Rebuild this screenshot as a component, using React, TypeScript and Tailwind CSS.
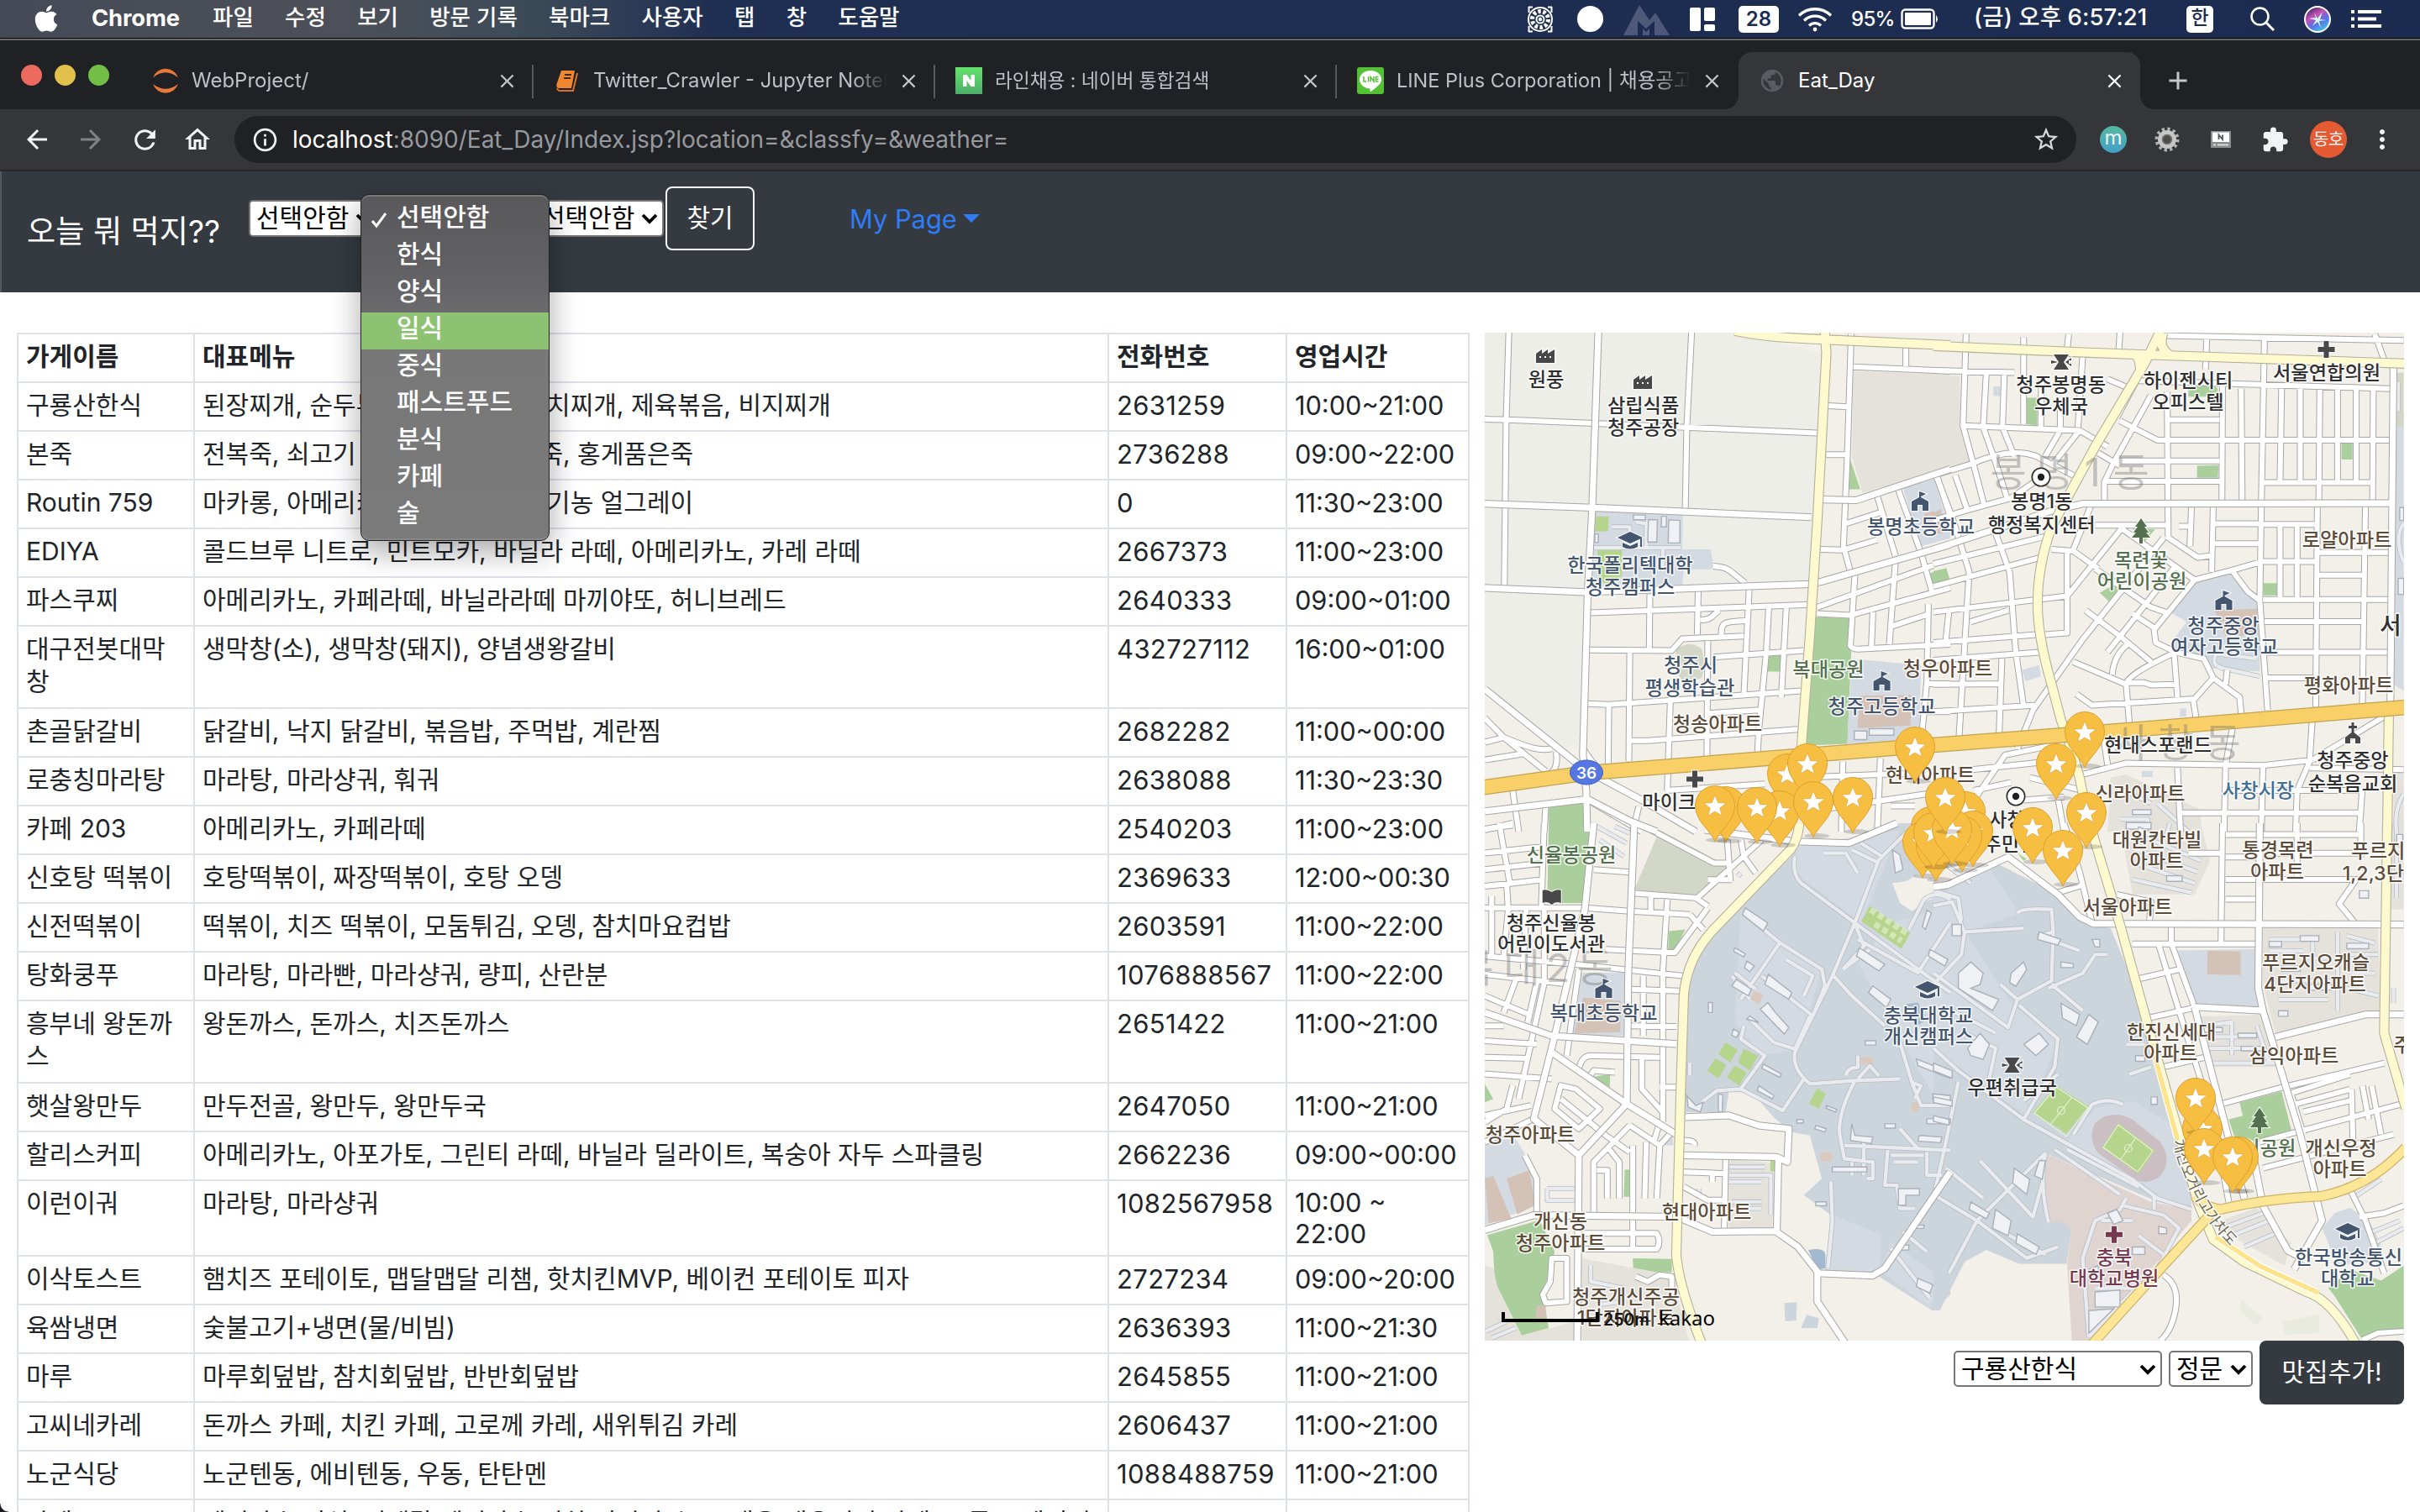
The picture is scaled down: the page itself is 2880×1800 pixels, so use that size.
import type { ReactNode } from "react";
import { FaApple } from "react-icons/fa";
import {
  MdArrowBack,
  MdArrowForward,
  MdRefresh,
  MdOutlineHome,
  MdInfoOutline,
  MdStarBorder,
  MdExtension,
  MdMoreVert,
  MdClose,
  MdAdd,
  MdPublic,
} from "react-icons/md";

/* ---------- macOS menu bar ---------- */

const menus = ["파일", "수정", "보기", "방문 기록", "북마크", "사용자", "탭", "창", "도움말"];

function MenuBar() {
  return (
    <header className="flex h-[45px] shrink-0 items-center bg-[linear-gradient(to_right,#454a57_0,#4d5058_400px,#3b4a58_640px,#1f2f52_850px,#1c2c50_100%)] pr-[46px] pl-10 text-[26.5px] font-medium text-white">
      <FaApple className="h-9 w-[30px] -translate-y-px" />
      <span className="ml-[39px] w-[108px] text-[27.3px] font-bold tracking-[-0.1px]">Chrome</span>
      <nav className="-mt-1 ml-9 flex gap-[37.3px]">
        {menus.map((m) => (
          <span key={m}>{m}</span>
        ))}
      </nav>
      <div className="ml-auto flex items-center">
        <svg width="32" height="32" viewBox="0 0 32 32" fill="none" stroke="#fff" strokeWidth="2">
          <circle cx="16" cy="16" r="14" />
          <circle cx="16" cy="16" r="9.500" strokeDasharray="3.500 2.467" strokeWidth="5" />
          <circle cx="16" cy="16" r="4.500" />
          <circle cx="16" cy="16" r="1.200" />
          <path d="M2 1.500h5M25 1.500h5M2 30.500h5M25 30.500h5M2.500 1v7M29.500 1v7M2.500 24v7M29.500 24v7" />
        </svg>
        <span className="ml-7 size-[31px] rounded-full bg-white" />
        <svg className="mt-0.5 ml-6 opacity-45" width="55" height="36" viewBox="0 0 55 36">
          <path d="M0 36 19 0l12 18 7-9 17 27z" fill="#8a90ac" />
          <path d="M17 36V19l10 9 10-9v17h-6v-8l-4 4-4-4v8z" fill="#1c2c50" />
        </svg>
        <span className="ml-6 flex h-7 w-[30px] gap-1">
          <span className="h-7 w-[13px] rounded-[2px] bg-white" />
          <span className="flex w-[13px] flex-col gap-1">
            <span className="h-4 rounded-[2px] bg-white" />
            <span className="h-2 rounded-[2px] bg-white" />
          </span>
        </span>
        <span className="ml-7 flex h-8 w-12 items-center justify-center rounded-[5px] bg-white text-[24px] font-semibold text-[#1c2c50]">28</span>
        <svg className="ml-[22px]" width="42" height="30" viewBox="0 0 42 30" fill="none" stroke="#fff" strokeWidth="3.400">
          <path d="M2 10.500a27 27 0 0 1 38 0M8 16.500a18.500 18.500 0 0 1 26 0M14 22.500a10 10 0 0 1 14 0" />
          <circle cx="21" cy="27" r="1.400" fill="#fff" strokeWidth="2" />
        </svg>
        <span className="ml-[22px] w-[49px] text-[24px] tracking-[-0.7px]">95%</span>
        <svg className="ml-[10px]" width="47" height="26" viewBox="0 0 47 26">
          <rect x="1.500" y="1.500" width="38" height="22" rx="4" fill="none" stroke="#fff" strokeWidth="2.400" />
          <rect x="5" y="5" width="31" height="15" rx="1" fill="#fff" />
          <path d="M42 8q4 4.500 0 9z" fill="#fff" />
        </svg>
        <span className="ml-[40px] w-[211px] -translate-y-0.5 text-[27.500px] whitespace-nowrap tracking-[0.1px]">(금) 오후 6:57:21</span>
        <span className="ml-[42px] flex size-8 items-center justify-center rounded-[5px] bg-white pb-0.5 text-[23px] text-[#1c2c50]">한</span>
        <svg className="ml-11" width="29" height="29" viewBox="0 0 29 29" fill="none" stroke="#fff" strokeWidth="2.500">
          <circle cx="11.500" cy="11.500" r="10" />
          <path d="m19 19 9 9" strokeWidth="3" />
        </svg>
        <span className="ml-[35px] flex size-8 items-center justify-center rounded-full border-2 border-white bg-[linear-gradient(150deg,#2d2a63_5%,#c84fb0_35%,#5b6fe8_60%,#3fc4e6_90%)]">
          <svg width="24" height="24" viewBox="0 0 24 24" fill="#d8fbff">
            <path d="m12 11 6-8-3 9 7 1-8 1 2 8-4-7-6 5 4-7-8-2 8-1-2-6z" />
          </svg>
        </span>
        <svg className="ml-6" width="36" height="22" viewBox="0 0 36 22" fill="#fff">
          <path d="M0 0h4v4H0zM8 0h28v4H8zM0 8.500h4v4H0zM8 8.500h22v4H8zM0 17h4v4H0zM8 17h28v4H8z" />
        </svg>
      </div>
    </header>
  );
}

/* ---------- browser chrome ---------- */

function JupyterIcon() {
  return (
    <svg width="32" height="32" viewBox="0 0 32 32" fill="#e8793a">
      <path d="M1 12.500a15.800 15.800 0 0 1 30 0Q16 0 1 12.500zM1 20a15.800 15.800 0 0 0 30 0Q16 31.500 1 20z" />
    </svg>
  );
}

function NotebookIcon() {
  return (
    <svg className="ml-0.5" width="28" height="28" viewBox="0 0 28 28">
      <path d="M7 2h16l-4 21H3.500q-3-1-2-5z" fill="#f08630" />
      <path d="M11 7h8M10 11h8" stroke="#3a2a1c" strokeWidth="1.800" />
      <path d="M2 23q1 3 3 3h16l5-21" fill="none" stroke="#d87425" strokeWidth="2" />
    </svg>
  );
}

function NaverIcon() {
  return (
    <span className="flex size-8 items-center justify-center bg-[linear-gradient(#63e36c,#4dae68)]">
      <svg width="14" height="14" viewBox="0 0 14 14" fill="#fff">
        <path d="M0 0h4.500l5 7V0H14v14H9.500l-5-7v7H0z" />
      </svg>
    </span>
  );
}

function LineIcon() {
  return (
    <span className="flex size-8 items-center justify-center rounded-[3px] bg-[#55bf36]">
      <svg width="28" height="27" viewBox="0 0 28 27">
        <path d="M14 1c7 0 13 4.500 13 10.500C27 17 20 22 14.500 26c-1 .6-1.200-.5-1-3.500C6.500 22 1 17.500 1 11.500 1 5.500 7 1 14 1z" fill="#fff" />
        <path d="M6 8v6h3M11.500 8v6.500M14 14.500V8.500l4 5.500V8M23.500 8.500h-3v5.500h3M20.500 11.200h3" fill="none" stroke="#55bf36" strokeWidth="1.500" />
      </svg>
    </span>
  );
}

const tabs: { title: string; icon: ReactNode; sep: boolean; size: string }[] = [
  { title: "WebProject/", icon: <JupyterIcon />, sep: true, size: "text-[24px]" },
  { title: "Twitter_Crawler - Jupyter Notebook", icon: <NotebookIcon />, sep: true, size: "text-[23.8px]" },
  { title: "라인채용 : 네이버 통합검색", icon: <NaverIcon />, sep: true, size: "text-[22.7px]" },
  { title: "LINE Plus Corporation | 채용공고", icon: <LineIcon />, sep: false, size: "text-[23.5px]" },
];

function TabStrip() {
  return (
    <div className="flex h-[82px] shrink-0 items-end bg-[#202124] pl-[25px]">
      <div className="mb-[28px] flex w-[132px] gap-[15px]">
        <span className="size-[25px] rounded-full bg-[#ed6a5e]" />
        <span className="size-[25px] rounded-full bg-[#e1c04c]" />
        <span className="size-[25px] rounded-full bg-[#72be47]" />
      </div>
      {tabs.map((t) => (
        <div key={t.title} className="relative flex h-[68px] w-[478px] items-center pl-6">
          <span className="w-8">{t.icon}</span>
          <span className={`ml-[15px] w-[350px] overflow-hidden [mask-image:linear-gradient(to_right,#000_88%,transparent_100%)] whitespace-nowrap text-[#bdc1c6] ${t.size}`}>
            {t.title}
          </span>
          <MdClose className="ml-3 size-[27px] text-[#c4c7ca]" />
          {t.sep && <span className="absolute top-[15px] right-0 h-10 w-0.5 bg-[#55585c]" />}
        </div>
      ))}
      <div className="relative flex h-[68px] w-[478px] items-center rounded-t-[16px] bg-[#35363a] pl-6">
        <span className="absolute bottom-0 -left-4 size-4 bg-[radial-gradient(circle_at_0_0,transparent_15.5px,#35363a_16px)]" />
        <span className="absolute -right-4 bottom-0 size-4 bg-[radial-gradient(circle_at_100%_0,transparent_15.5px,#35363a_16px)]" />
        <MdPublic className="size-8 text-[#5a5c61]" />
        <span className="ml-[15px] w-[350px] text-[24px] text-white">Eat_Day</span>
        <MdClose className="ml-[13px] size-[27px] text-white" />
      </div>
      <MdAdd className="mb-[16px] ml-[27px] size-9 text-[#c4c7ca]" />
    </div>
  );
}

function Toolbar() {
  return (
    <div className="flex h-[72px] shrink-0 items-center bg-[#35363a] pl-[26px] text-[#f1f3f4]">
      <MdArrowBack className="size-9" />
      <MdArrowForward className="ml-7 size-9 text-[#818286]" />
      <MdRefresh className="ml-7 size-[37px]" />
      <MdOutlineHome className="ml-[26px] size-9" />
      <div className="ml-[26px] flex h-14 w-[2192px] items-center rounded-full bg-[#202124] pr-[19px] pl-5">
        <MdInfoOutline className="size-[33px]" />
        <span className="ml-4 text-[28px] text-[#96999d]">
          <span className="text-white">localhost</span>:8090/Eat_Day/Index.jsp?location=&amp;classfy=&amp;weather=
        </span>
        <MdStarBorder className="ml-auto size-[34px] text-[#d6d8da]" />
      </div>
      <span className="ml-7 flex size-8 items-center justify-center rounded-full bg-[linear-gradient(#55b9a0,#45a0c8)] text-[24px] leading-none">
        <span className="-mt-1">m</span>
      </span>
      <svg className="ml-8" width="32" height="32" viewBox="0 0 32 32" fill="none">
        <circle cx="16" cy="16" r="12.500" stroke="#b4b4b2" strokeWidth="4" strokeDasharray="3.270 3.270" />
        <circle cx="16" cy="16" r="8.500" stroke="#c6c6c4" strokeWidth="5" />
        <circle cx="16" cy="16" r="5.500" fill="#4b4b4b" stroke="#777" strokeWidth="1.500" />
      </svg>
      <svg className="ml-9" width="24" height="20" viewBox="0 0 24 20">
        <path d="M0 0h24v20H0z" fill="#8d8e90" />
        <path d="M2 1.500h20V13H2z" fill="#fff" />
        <path d="M9.500 10V4.500L14 10V4.500" fill="none" stroke="#555" strokeWidth="1.800" />
        <path d="M3 16.500h3M8 16.500h13" stroke="#eee" strokeWidth="1.500" />
      </svg>
      <MdExtension className="ml-9 size-[33px]" />
      <span className="ml-[25px] flex size-11 items-center justify-center rounded-full bg-[#e45b33] text-[20px] tracking-[-0.5px]">동호</span>
      <MdMoreVert className="ml-6 size-9" />
    </div>
  );
}

/* ---------- page header ---------- */

function Chevron() {
  return (
    <svg width="20" height="14" viewBox="0 0 20 14" fill="none" stroke="currentColor" strokeWidth="3.800" className="shrink-0">
      <path d="m2 3 8 8 8-8" />
    </svg>
  );
}

function SelectBox({ label, className }: { label: string; className: string }) {
  return (
    <div className={`flex items-center justify-between rounded-[5px] border-2 border-[#767676] bg-white pr-[5px] pl-[7px] text-[30px] leading-[36px] text-black ${className}`}>
      <span className="-mt-0.5 whitespace-nowrap">{label}</span>
      <Chevron />
    </div>
  );
}

const options = ["선택안함", "한식", "양식", "일식", "중식", "패스트푸드", "분식", "카페", "술"];

function OptionMenu() {
  return (
    <ul className="absolute top-[-7px] left-[-23px] z-10 h-[413px] w-[225px] overflow-hidden rounded-[10px] border border-[#222] bg-[linear-gradient(#59595b_0,#616163_90px,#6b6b6d_140px,#787878_190px,#7a7a7a_100%)] pt-2 text-[30px] leading-[40px] font-medium text-white shadow-[0_12px_36px_rgba(0,0,0,0.35),inset_0_2px_0_rgba(255,255,255,0.18),inset_0_-2px_0_rgba(255,255,255,0.1)]">
      {options.map((o, i) => (
        <li key={o} className={`flex h-11 items-center pb-2 ${i === 3 ? "bg-[#8dc272]" : ""}`}>
          <span className="ml-[11px] flex w-[31px]">
            {i === 0 && (
              <svg className="mt-2" width="20" height="20" viewBox="0 0 20 20" fill="none" stroke="#fff" strokeWidth="3">
                <path d="m2 11 5 6L18 2" />
              </svg>
            )}
          </span>
          {o}
        </li>
      ))}
    </ul>
  );
}

function PageHeader() {
  return (
    <div className="flex h-[144px] shrink-0 items-start border-l-2 border-[#54595d] bg-[#343a40] pt-[18px] pl-[30px] text-white">
      <h1 className="mt-[28px] w-[264px] text-[37.2px] leading-[52px] whitespace-nowrap">오늘 뭐 먹지??</h1>
      <SelectBox label="선택안함" className="mt-4 h-11 w-[154px]" />
      <div className="relative mt-4 ml-0.5 h-11 w-[182px]">
        <div className="h-11 rounded-[5px] border-2 border-[#767676] bg-white" />
        <OptionMenu />
      </div>
      <SelectBox label="선택안함" className="mt-4 ml-0.5 h-11 w-[154px]" />
      <button className="ml-0.5 h-[76px] w-[106px] rounded-[8px] border-2 border-[#f8f9fa] pb-0.5 text-[30px]">찾기</button>
      <a className="mt-[17px] ml-[113px] flex items-center text-[30.8px] leading-[44px] text-[#2f7df6]">
        My Page
        <span className="-mt-0.5 ml-[7px] border-x-[10px] border-t-[10px] border-x-transparent border-t-[#2f7df6]" />
      </a>
    </div>
  );
}

/* ---------- restaurant table ---------- */

const shops: [string, string, string, string][] = [
  ["구룡산한식", "된장찌개, 순두부찌개, 청국장, 김치찌개, 제육볶음, 비지찌개", "2631259", "10:00~21:00"],
  ["본죽", "전복죽, 쇠고기 야채죽, 동지단팥죽, 홍게품은죽", "2736288", "09:00~22:00"],
  ["Routin 759", "마카롱, 아메리카노, 카페라떼, 유기농 얼그레이", "0", "11:30~23:00"],
  ["EDIYA", "콜드브루 니트로, 민트모카, 바닐라 라떼, 아메리카노, 카레 라떼", "2667373", "11:00~23:00"],
  ["파스쿠찌", "아메리카노, 카페라떼, 바닐라라떼 마끼야또, 허니브레드", "2640333", "09:00~01:00"],
  ["대구전봇대막창", "생막창(소), 생막창(돼지), 양념생왕갈비", "432727112", "16:00~01:00"],
  ["촌골닭갈비", "닭갈비, 낙지 닭갈비, 볶음밥, 주먹밥, 계란찜", "2682282", "11:00~00:00"],
  ["로충칭마라탕", "마라탕, 마라샹궈, 훠궈", "2638088", "11:30~23:30"],
  ["카페 203", "아메리카노, 카페라떼", "2540203", "11:00~23:00"],
  ["신호탕 떡볶이", "호탕떡볶이, 짜장떡볶이, 호탕 오뎅", "2369633", "12:00~00:30"],
  ["신전떡볶이", "떡볶이, 치즈 떡볶이, 모둠튀김, 오뎅, 참치마요컵밥", "2603591", "11:00~22:00"],
  ["탕화쿵푸", "마라탕, 마라빤, 마라샹궈, 량피, 산란분", "1076888567", "11:00~22:00"],
  ["흥부네 왕돈까스", "왕돈까스, 돈까스, 치즈돈까스", "2651422", "11:00~21:00"],
  ["햇살왕만두", "만두전골, 왕만두, 왕만두국", "2647050", "11:00~21:00"],
  ["할리스커피", "아메리카노, 아포가토, 그린티 라떼, 바닐라 딜라이트, 복숭아 자두 스파클링", "2662236", "09:00~00:00"],
  ["이런이궈", "마라탕, 마라샹궈", "1082567958", "10:00 ~\n22:00"],
  ["이삭토스트", "햄치즈 포테이토, 맵달맵달 리챔, 핫치킨MVP, 베이컨 포테이토 피자", "2727234", "09:00~20:00"],
  ["육쌈냉면", "숯불고기+냉면(물/비빔)", "2636393", "11:00~21:30"],
  ["마루", "마루회덮밥, 참치회덮밥, 반반회덮밥", "2645855", "11:00~21:00"],
  ["고씨네카레", "돈까스 카페, 치킨 카페, 고로께 카레, 새위튀김 카레", "2606437", "11:00~21:00"],
  ["노군식당", "노군텐동, 에비텐동, 우동, 탄탄멘", "1088488759", "11:00~21:00"],
  ["카레", "에비카츠 정식, 미네랄 에비카츠 김치 어니언 수프, 매운 새우튀김 카레, 모듬 토레이커", "", ""],
];

function ShopTable() {
  return (
    <table className="ml-5 w-[1727px] shrink-0 table-fixed border-collapse text-[30px] leading-[39px] text-[#212529] [&_td]:border-2 [&_td]:border-[#dee2e6] [&_td]:px-[9px] [&_td]:pt-[7px] [&_td]:pb-0 [&_td]:align-top [&_td]:break-all [&_th]:border-2 [&_th]:border-[#dee2e6] [&_th]:px-[9px] [&_th]:pt-[7px] [&_th]:text-left [&_th]:align-top">
      <colgroup>
        <col className="w-[210px]" />
        <col className="w-[1088px]" />
        <col className="w-[212px]" />
        <col className="w-[217px]" />
      </colgroup>
      <thead>
        <tr className="h-[58px]">
          <th>가게이름</th>
          <th>대표메뉴</th>
          <th>전화번호</th>
          <th>영업시간</th>
        </tr>
      </thead>
      <tbody>
        {shops.map(([name, menu, tel, time], i) => (
          <tr key={name} className={i === 5 || i === 12 ? "h-[98px]" : i === 15 ? "h-[90px]" : "h-[58px]"}>
            <td>{name}</td>
            <td className="whitespace-nowrap">{menu}</td>
            <td className="text-[31px] tracking-[0.35px]">{tel}</td>
            <td className={i === 15 ? "text-[30.7px] leading-[37px] whitespace-pre" : "text-[30.7px] whitespace-nowrap"}>{time}</td>
          </tr>
        ))}
      </tbody>
    </table>
  );
}

/* ---------- map ---------- */

/* The map is drawn in four tiles; each has its own coordinate grid. */
const tile = {
  A: "matrix(.35714 0 0 .38265 1760 390)",
  B: "matrix(.3699 0 0 .38265 2300 390)",
  C: "matrix(.35714 0 0 .3954 1760 980)",
  D: "matrix(.3699 0 0 .4464 2300 980)",
};
type Tile = keyof typeof tile;
const tileKeys: Tile[] = ["A", "B", "C", "D"];

const INDUSTRY = "#edeee8";
const BLOCK = "#e5e2dc";
const GREEN = "#aacf9c";
const SCHOOL = "#d3dae2";
const CAMPUS = "#ccd4dc";
const BROWN = "#d4c2b6";
const OLIVE = "#d3d7c7";
const COURT = "#b5d48c";
const LAND = "#f3f0ea";

const areas: Record<Tile, [string, string][]> = {
  A: [
    [INDUSTRY, "M17 15H850L1140 80 1100 800 370 815 350 1300 240 1310 17 1120z"],
    [BLOCK, "M1245 135 1568 145V435L1275 515 1240 400z"],
    [GREEN, "M1235 410 1268 503H1230zM1495 765 1555 748 1568 790 1510 806zM1118 900 1232 905 1238 1010 1225 1295 1088 1300zM962 1022 1005 1020 1000 1070H958zM230 1490 343 1478 352 1568H230z"],
    [SCHOOL, "M383 570 677 582 675 690H770L778 740 770 752H680L675 800 375 805zM1410 500 1515 470 1568 640V655L1470 680zM1240 1030 1470 1050 1465 1285 1225 1295z"],
    [COURT, "M388 587 430 588 428 634H384zM392 688H474V770L440 800 395 790z"],
    [BROWN, "M1268 1145 1440 1143 1435 1238 1258 1246zM1480 580 1530 565 1560 640 1530 655 1520 620 1490 630z"],
    [OLIVE, "M655 1000Q700 970 740 1000 755 1050 740 1090L680 1110 650 1060z"],
  ],
  B: [
    [BLOCK, "M0 150H85V310L130 430 0 450zM570 1400 620 1390 860 1500V1568H560zM1480 1380H1513V1568H1480z"],
    [GREEN, "M300 218H335L333 305 297 300zM820 180 880 165 915 190 910 215H820zM848 430 917 428 915 467H848zM1313 360H1348V410H1313zM1062 795H1105V833H1062zM580 800 600 825 573 860 535 825zM640 625 713 628 680 665zM0 757 40 750 52 790 0 803z"],
    [SCHOOL, "M840 790 960 760 1045 850 1050 960V1070L890 1060 870 1030 750 1000 815 915 750 880zM0 500 20 540 60 650 0 660zM1488 310H1513V1130L1480 1110zM285 1065 340 1050 345 1085 295 1100zM670 1380H705V1398H670zM793 1185H813V1210H793zM193 183H215V213H193z"],
    [BROWN, "M905 880 1040 875 1045 955 940 960zM0 575 25 565 30 640 0 640z"],
    [OLIVE, "M1490 140H1513V310H1490z"],
  ],
  C: [
    [CAMPUS, "M1055 70 1250 60 1400 0H1568V1420L1510 1468 1330 1365H1310L1150 1350 1170 1180 1080 1120 1140 1070 1100 940 1040 930 985 890 905 810H830L820 870H685L690 480 740 380 880 240 1040 100z"],
    [SCHOOL, "M1055 70 1400 20 1270 300 1050 150zM1370 300 1568 250V900L1400 650 1260 420zM870 260 1140 440 1060 680 940 700 850 600zM1180 1180 1340 1240 1330 1360 1165 1350zM1370 1260 1540 1370 1500 1460 1340 1350z"],
    [LAND, "M1375 180 1420 175 1560 100H1568V200L1480 240 1440 265 1400 240z"],
    [GREEN, "M230 0H375L355 240H225zM630 325 685 320 650 385 628 380zM370 765 435 755 433 795zM17 785 45 830 17 840zM483 1043H500V1125H480zM510 1310 640 1312V1352H512zM25 1240 200 1195 250 1290 210 1420 230 1520 140 1543 50 1380 45 1290z"],
    [OLIVE, "M600 20 830 130 720 225 515 200z"],
    [SCHOOL, "M340 450H495L480 640H310zM17 955 120 950 200 1070 190 1150 17 1210zM610 970 640 930 645 970z"],
    [BROWN, "M345 525 470 535 468 630 315 632zM17 1070 45 1062 105 1190 30 1205zM90 1070 165 1045 185 1150 125 1178zM190 1452H220V1490H186z"],
    [BLOCK, "M830 1010 980 1025 975 1220H830zM340 1310 640 1360 700 1568H340zM17 1330 45 1340 60 1400 140 1543 320 1500V1568H17z"],
    ["#a3b9d1", "M1095 1285Q1150 1275 1152 1300V1340L1125 1345zM1420 545 1460 540 1490 590 1450 615z"],
    [COURT, "M1300 250 1435 330 1405 378 1272 295zM820 660 860 682 835 720 795 695zM880 680 928 700 900 745 860 720zM785 708 822 728 795 768 758 745zM850 730 890 750 865 790 823 765zM1125 798 1153 815 1130 860 1097 845zM968 1015H985V1048H968z"],
    ["#dcc9bd", "M915 505 945 515 930 545 903 530zM1270 705H1310V725H1270zM1138 990 1175 992V1018H1135zM1440 840H1460V868H1437z"],
    [CAMPUS, "M1015 1445 1057 1442 1055 1497 1018 1500zM1090 1480 1130 1490 1125 1520H1070z"],
  ],
  D: [
    [CAMPUS, "M0 150 50 170 210 110 400 190 510 270 570 280 640 420 700 560 760 740 830 940V1030L720 1010 360 880 350 900 370 1070 420 1030 445 1080 428 1175H275L170 1138 100 1170 20 1300H0z"],
    [SCHOOL, "M0 200 180 120 280 240 100 290 250 480 400 580 300 780 80 650 0 600zM430 850 520 760 640 740 760 800 830 940V1020L720 1000zM770 340 1040 335V440L1055 490 845 485zM1250 1080 1290 1040 1340 1025 1400 1060 1440 1120 1420 1170 1300 1180z"],
    ["#e0d4d1", "M360 880 700 1010 830 1030V1060L510 1380H445L430 1175 445 1080 400 1060 370 1070 345 960z"],
    [BROWN, "M882 340 988 342V405L880 403z"],
    [BLOCK, "M600 0 860 0 890 100 840 190 640 190zM1060 280 1430 280 1440 500 1100 560 1060 430zM850 515 1080 510 1120 650 900 650zM890 1070 1040 1025 1150 1120 1130 1180zM1470 0H1513V230H1470z"],
    [GREEN, "M950 790 995 780 985 745 1120 715 1155 830 1060 850 970 840zM1270 1240 1340 1190 1440 1220 1513 1180V1350L1380 1378 1290 1260zM270 80 300 95 290 100z"],
    [COURT, "M395 700 498 755 428 828 320 770z"],
    ["#cbbfc4", "M520 800Q570 760 640 790L730 850Q770 900 730 940 690 970 640 945L530 880Q495 840 520 800z"],
    [COURT, "M595 800 712 872 660 935 542 865z"],
    ["#e9ebe0", "M990 1270 1060 1320 1040 1340 985 1300zM1120 1330 1240 1310V1360L1130 1365z"],
  ],
};

/* Ordinary streets: white with a grey outline. */
const streets: Record<Tile, string> = {
  A: "M97 15 88 290 85 550 82 805M706 15 690 310 685 565M17 285 95 287 380 298 1125 328M370 887 860 870 1095 862M567 830 565 1005M728 820 725 955M898 812 880 1150M735 910C780 910 780 885 800 880M805 955C805 915 815 915 885 912M360 1003 640 1005 675 968 880 960M500 1010 497 1350M635 1165 625 1440M760 975 757 1350M963 870 955 1010 930 1250 925 1340M1022 865 1005 1150M780 1025 1078 1005M360 1170 430 1173 630 1160 1070 1130M430 1180 428 1370M500 1285 560 1285 1060 1250M778 742C830 745 830 755 885 795M760 1200 930 1190M17 1290 80 1275C150 1300 190 1320 240 1310M17 1215 80 1275 220 1380M17 1345 150 1325M255 1320C260 1360 250 1380 235 1385M345 1310Q370 1350 400 1375M110 1440 130 1568M220 1490 215 1568M355 1467 540 1568M530 1490 510 1568M17 1560 110 1548M620 1440 950 1420M1060 1400 1480 1385M1210 1350 1205 1568M1335 1340 1325 1568M1130 1500 1568 1440M1370 1488H1450M1238 20 1225 400 1212 680 1235 760M1245 122 1568 135M1420 50V120M1160 243 1225 246M1155 395H1220M1135 690 1210 692 1325 660M1220 610 1335 575M1325 525 1385 710M1395 505 1470 700 1510 830M1525 465 1568 590M1125 870 1510 740M1125 890 1235 895 1568 810M1250 770 1235 990Q1240 1000 1260 1000L1568 985M1385 730 1365 985M1310 885 1305 1000M1370 930 1500 890M1495 860 1490 1100 1470 1300M1490 1108H1568M1475 1195H1568",
  B: "M0 133 260 140M105 20 95 310M170 140 160 310M228 140 222 310 260 400M290 30V300M348 150 345 310M408 250V310M95 305 470 320 560 370M95 305 130 430 165 560M160 310 200 420 240 540M470 320 380 430M405 325 360 400M480 90 465 310M0 460 120 425Q250 370 330 400L450 460M0 600 100 570 250 530 340 470M0 735 360 650M0 805 345 715M0 885 430 835M10 465 60 590 115 760 80 1310M70 460 110 570M200 640 245 760 265 1010 290 1180M120 915 240 880M0 980 330 955M0 1035 340 1010M0 1110 220 1108M0 1195 330 1175M220 1030 210 1300M50 880 40 970M435 20 430 70M600 15 595 90M560 160 620 185M600 290 720 350 1470 350M650 170 590 280M752 200 755 650M755 287H920M580 415H920M550 478H930M700 210 580 420 550 480V545M530 390 600 430M880 20 875 130M1065 25 1055 540M740 25 1513 40M1420 20 1450 100M930 170 928 540M990 190 993 540M660 165 1470 190M1120 190 1115 480M1180 190V480M1243 180 1240 540M1300 190V480M1360 190V480M1415 190 1413 540M1060 482H1410M830 560 825 680M900 560 895 760M790 618H830M520 615H750M750 650 850 715 890 710M905 610H1050M905 672H1050M1055 550 1050 850 1075 1190M1055 612H1230M1055 728H1235M1115 620V840M1170 620V840M1235 560 1230 1180M1390 540 1380 1170M1240 700H1465M1240 770H1390M1240 846H1465M1060 846H1240M1065 915H1385M1070 1010H1465M1075 1090H1220M840 785 960 755 1050 730M960 755 1010 820 1050 850M605 625 430 835M740 655 480 970 320 1190 270 1310M840 785 710 940 715 980 780 1010 870 1030 900 1090 985 1150 990 1200M605 625 840 785M520 750 700 870 760 890M380 690 450 695 530 750M490 880 600 960 700 1040M430 700V950L360 955M640 890 720 940M510 545 450 690M450 1040 620 1110 630 1230M620 1110Q620 1080 780 1010M625 985Q580 1020 575 1080M460 1140 510 1175 840 1155 900 1090M775 1020 785 1150M835 1155 845 1215M780 1110 700 1112 680 1105 620 1105M945 1065 940 1110M780 740 560 1010M480 1390 620 1355 1060 1362 1220 1345M545 1260 560 1360M785 1370 795 1568M965 1230 940 1360 935 1568M1060 1362 1055 1568M1220 1200 1210 1350 1170 1440 1165 1568M1220 1345 1450 1210M1380 1430 1370 1568M800 1510H1370M935 1440H1380M1210 1370 1513 1375M80 1380 370 1350M130 1470 230 1330 380 1300M130 1440 250 1415M290 1470 420 1460M400 1460 420 1568M310 1400 480 1440",
  C: "M17 20 110 0M17 90 215 70M17 140 210 120M17 190 210 170M65 0 100 180M215 0 205 260M17 255 350 255 500 265 700 275M380 140 510 148M500 210 725 225 940 50M720 225 760 250M825 50 835 175M870 50 880 100 920 150M760 170H840M570 20 780 120H835M625 230 610 450M570 210V270M700 275 745 320M760 255 650 390 420 380M17 400 320 425 680 460M17 455 300 485M90 190 95 260 80 400M40 220V400M155 260 145 440M215 260V480L130 830M17 520 160 575M125 460 80 570M190 480 160 600M330 440 290 700M500 500 665 505M545 460V640M610 460V900M17 610H80M17 655 190 665M17 705 165 708M17 755 240 770M17 880 170 850M500 610 655 612M330 740Q340 700 370 700L600 705M360 770 380 745 450 750M600 795H655M250 860 330 920 400 860 320 800 270 790zM180 890 17 960M270 830 420 940 500 990M17 900 90 860 110 790M540 700V800L610 870M500 910 380 1020V1180M500 910 600 970 590 1130M430 980 465 1020V1130M390 1045H425V1130M510 970V1290M555 960 550 1130M600 900 580 960M640 930 600 970M150 1000 190 1070V1180M345 1235H590Q605 1260 590 1282H345M240 1310H290V1440L220 1445 210 1420 235 1380zM520 1365 560 1380 600 1360 640 1365V1440M820 1005 815 1220M680 1095 760 1135H820M680 1050 820 1055M775 1055V1080M680 955Q720 955 715 970",
  D: "M420 0 470 130 510 265M400 185 480 165M590 190 700 210 695 260M640 322H1045M765 275V320L840 490M725 325 790 500 900 790 950 1010M660 415 790 390M690 520 850 490M930 0 925 320M740 650 870 625M920 750 1120 705 1450 640M1150 720 1190 830M1150 720 1340 670M1160 750 1340 710M1050 850 1500 750M1060 920 1480 830M1190 770 1340 740M1345 710 1350 860M1410 700 1440 830M1380 700 1400 790M940 30H1370M940 90H1050M940 150H1360L1305 215 1355 265M940 203H1050M1060 80H1370M820 80H930M1170 0V150M1375 0V90M1000 1000 960 900M740 1205Q790 1230 780 1290 770 1350 730 1380M1370 1050 1450 1040 1513 1020M1330 960 1390 1060 1450 1200M1380 1378 1430 1360 1513 1355",
};

/* Wider connecting streets. */
const mainStreets: Record<Tile, string> = {
  A: "M395 15 375 560 360 820 344 1330 355 1440 358 1568M17 548 375 560 1105 590M17 810 350 823 1100 798 1140 790 1568 675M1145 535 1255 537 1568 440M17 1125 350 1375 540 1470 720 1568M17 1505 360 1467 500 1535 590 1568",
  B: "M0 690 380 570 480 548 1470 546M1480 120 1470 1170",
  C: "M380 0 350 260 250 640 180 890 330 1000 325 1568M515 0 495 450 490 850M17 570 240 640 655 665M240 690 490 845 660 940M490 845 330 1000M17 1225 180 1180 660 1185M685 885 830 880 930 910 1030 920 1025 1020 990 1005 680 1000M995 1010 990 1225M670 1190 775 1230 985 1228 1060 1275 1125 1350V1440L1220 1568M1125 1355 1310 1362 1350 1340 1568 1050M750 20 1050 55 1230 60 1390 0",
  D: "M0 170 45 165 240 90 400 190 470 250 515 268 1513 270M1050 0 1045 440 1060 500 1180 830 1250 1060 1160 1190M840 490 1060 500M1100 570 1390 510 1513 510M840 490 1000 1000M1020 850 1060 1020 1140 1140 1210 1170",
};

/* Faint footways on the campus, the hospital and the apartment blocks. */
const footways: Record<Tile, string> = {
  A: "M440 620H500V670M380 685H670M560 600V660M520 605 555 610V680M610 690V760",
  B: "M1040 1030 910 1015Q890 1050 930 1060L1050 1085M1510 560V600M1513 610Q1480 650 1513 730M590 1430 700 1480M600 1530H690V1568M720 1480 820 1568M1513 1450Q1480 1500 1490 1568M1495 170V260",
  C: "M1050 100Q1040 150 1070 180L1250 300 1568 510M1420 30 1330 110 1250 300 1175 460 1050 690Q1040 740 1100 785L1250 775 1400 770M1175 455 1240 520 1350 610M1260 350 1460 450 1568 300M1250 300 1280 370 1210 440M880 270 1000 360 870 530M1000 360 1140 440 1150 490 1110 580M940 460 1110 580M1020 410 1110 460 1080 520M1100 580 1050 680 980 660 900 590M880 610 870 650 950 700 870 800M1080 770 1010 865 870 800 790 805 740 840M1250 775Q1190 880 1200 940L1215 1010 1310 1020V1070H1290M1215 970 1568 985M1400 660 1440 780 1470 850 1568 850M1360 980 1350 1090H1390L1400 1160H1450M1170 1080 1175 1200 1160 1340M1220 760Q1225 735 1260 735V700M1260 770 1300 730 1330 760M1400 920 1460 980M1490 990V1060H1540M1370 1280 1500 1430M1410 1230 1490 1290M1430 320 1480 230Q1520 200 1568 230M1145 90H1220L1260 150M1240 80 1330 120M1270 60 1340 100M840 460 900 530M850 450 920 500M1210 440 1300 380M700 720V760M860 160 870 150M1440 780 1470 790 1450 830M1240 1020V1060M1370 1000H1480M1380 1020H1460M225 1100H315M225 1100V1135H315M830 1035H950M830 1060H970V1180M830 1080H940M840 1140H940M840 1160H940M370 1330V1380L480 1400M390 1450 480 1440M20 1530 90 1500M40 1550 120 1520M390 10 490 60M400 50 480 100M450 10 500 30M730 1100 730 1130M1280 960V1060",
  D: "M0 220 60 210 100 290 290 280M100 290 90 350 0 430M270 240Q280 225 380 230L385 290 340 300 470 340M385 290 380 420 270 470 215 430M270 470 240 545 0 400M275 485 400 575 390 650 290 790M380 430 480 500M370 440 480 400 520 350 560 350M0 600 80 660 290 790 420 850 640 950 720 1000 830 1030M80 690 40 850 0 1000M0 990 140 1060 360 880M140 1060 300 1160 400 1130M140 1060 50 1200M360 880Q340 960 370 1065M450 830 510 750Q560 730 610 750M100 560 200 600 180 680M60 500 200 560M150 900 320 1050 350 960M40 920 160 1000M200 1080 360 1150M400 670 290 740M500 1370 480 1160 520 1060 600 1030 620 1000M610 1020 740 1045 790 1080 700 1220 640 1250 500 1370M660 1100 740 1150M520 1240H640M540 1060H640M710 990V1030M390 870 600 990M430 870 660 970M40 110 120 160M0 180 80 200 90 260M660 30 860 100M650 70 850 130M660 110 840 160M640 150 830 185M760 0 740 60M1080 310H1200M1080 340H1190M1220 300V360H1280M1300 290V500M1330 300 1420 320M1340 350H1430M1340 400H1420M1120 420H1280M1110 470H1270M1330 440 1430 460M870 540 960 530M870 570H1040M880 600H1050M900 640H1100M960 530V620M1040 540 1080 640M1490 20V200M1480 70H1513M1480 140H1513M1480 440V480M1350 1000 1440 950M1410 1090 1500 1060M1420 1120 1513 1080M930 1080 1060 1040M960 1100 1080 1060M1000 1130 1110 1090M630 670 700 650M620 590H680",
};

const buildings: Record<Tile, string> = {
  A: "M512 583H552V598H512zM562 597 592 598 590 667H560zM606 587H622V620H605zM630 598 667 600V670H628zM384 642H395V668H383zM1248 1255H1290V1282H1248zM1298 1248H1380V1268H1298z",
  B: "M1500 560H1513V600H1500zM1495 780H1513V830H1495zM620 1540H700V1560H620zM640 1500H700V1515H640z",
  C: "M885 255 960 300 945 325 875 275zM962 455 1040 510 1030 530 950 485zM935 560 960 540 985 570 1030 615 1015 635zM1265 375 1350 425 1330 445 1255 400zM1310 490 1370 530 1355 555 1295 510zM855 470 905 500 895 520 840 490zM890 415 915 430 900 447 882 435zM850 375 885 393 880 403 846 385zM1240 905 1250 940 1310 945 1305 965 1235 955zM1175 1035H1290V1050H1175zM1395 1100H1465V1120H1420V1150H1395zM1455 710 1568 750V768L1460 730zM1510 815 1568 820V838L1510 832zM1490 890H1568V905H1490zM1465 940 1540 945 1535 962 1460 957zM795 815 810 817 808 870 795 868zM930 790 980 820 975 830 925 805zM945 725 1005 755 1000 765 940 738zM762 540H775V570H762zM1350 905H1385V918H1350zM1120 910 1155 920 1150 930 1116 920zM1057 892H1078V903H1057zM1120 1140H1155V1152H1120zM1285 655H1320V668H1285zM1155 850 1190 862 1186 870 1154 858zM1375 80 1400 95 1410 140 1385 150zM1490 262 1505 270 1485 320 1475 312zM1500 380 1560 410 1550 430 1495 400zM1460 1370 1510 1390 1500 1415 1455 1395zM690 820 720 850 745 840 735 870 695 855zM1410 1270H1430V1285H1405zM1450 1210H1480V1220H1450zM890 590 900 580 930 600zM845 620 865 630 855 645 840 638z",
  D: "M60 270H90V300H60zM80 400 120 370 160 400 150 430 120 440 210 470 190 500 80 440zM250 400 290 370 300 390 265 435 245 425zM340 290 410 310 400 325 335 310zM410 480 470 510 460 540 415 520zM500 510 530 530 495 590 460 570zM290 590 340 560 370 590 330 620zM110 600 150 560 180 590 160 630 120 620zM260 920 310 950 300 990 255 960zM340 900 360 900 350 950 325 940zM200 1030 250 1060 240 1100 190 1080zM270 1095 340 1130 330 1150 265 1120zM120 1010 180 1040 170 1055 115 1030zM0 640 60 660V680L0 660zM0 730 60 740V755L0 745zM0 780 50 790V805L0 795zM410 370 450 375V385H410zM510 310H535V330H520zM720 650 760 700M520 1250 600 1245V1290H520zM500 1190 530 1180V1220H500zM500 1300 580 1295 500 1360zM560 1040 590 1030 610 1060 580 1070zM725 1075 750 1080V1095H725zM640 1130H680V1150H640zM650 620H680V635H650zM1110 500H1140V515H1110zM1180 300H1240V315H1180zM1080 315H1120V330H1080zM1330 320H1400V335H1330zM1120 380H1180V395H1120zM1200 430H1280V445H1200zM870 545H930V557H870zM980 560H1040V572H980zM990 595H1060V607H990zM660 10 720 30 715 45 655 25zM750 140H800V155H750zM1490 30H1510V60H1490zM1370 180H1400V200H1370zM700 730H720V750H700z",
};

/* Pale yellow arterials. */
const arterials: Record<Tile, string> = {
  A: "M1150 10 1155 80 1125 600 1100 960 1070 1330M850 10Q950 30 1100 35L1568 55",
  B: "M0 57 500 78 700 85 1520 112M730 10 680 110 520 370 380 620Q335 740 335 860 335 960 380 1110L410 1220 440 1300 470 1400 505 1568M740 15Q720 60 760 85M650 85Q665 100 665 130M1465 1200 1460 1568",
  C: "M1065 0Q1060 50 1035 80L790 310Q690 400 680 520L670 800 655 1300Q665 1400 740 1568",
  D: "M500 -5 600 270 700 570 800 860 850 1010 900 1110 1000 1170 1200 1250Q1280 1270 1360 1390M1460 0 1450 560 1520 760",
};

type Label = [x: number, y: number, text: string, color?: string, size?: number];
const DARK = "#2f2f31";
const NAVY = "#44566f";
const UMBER = "#5d4c3a";
const MOSS = "#54704f";
const WINE = "#76394f";

const labels: Label[] = [
  [1839, 451, "원풍"],
  [1954.6, 482, "삼립식품"],
  [1954.6, 508.6, "청주공장"],
  [1939, 672.4, "한국폴리텍대학", NAVY],
  [1939, 698, "청주캠퍼스", NAVY],
  [2285, 626, "봉명초등학교", NAVY],
  [2011, 791, "청주시", NAVY],
  [2010, 818, "평생학습관", NAVY],
  [2043, 861, "청송아파트", UMBER],
  [2175, 796, "복대공원", MOSS],
  [2317, 795, "청우아파트", UMBER],
  [2238.6, 840, "청주고등학교", NAVY],
  [2296, 922, "현대아파트", UMBER],
  [1996, 954.5, "마이크로"],
  [2451.7, 457.7, "청주봉명동"],
  [2452, 483, "우체국"],
  [2603, 452, "하이젠시티"],
  [2603, 478, "오피스텔"],
  [2768, 443, "서울연합의원"],
  [2428.7, 596.6, "봉명1동"],
  [2428.7, 624, "행정복지센터"],
  [2547, 666, "목련꽃", MOSS],
  [2548, 691, "어린이공원", MOSS],
  [2792, 642, "로얄아파트", UMBER],
  [2645, 744, "청주중앙", NAVY],
  [2646, 769.6, "여자고등학교", NAVY],
  [2844, 746, "서", DARK, 28],
  [2794, 815, "평화아파트", UMBER],
  [2567, 886.7, "현대스포랜드"],
  [2546, 944, "신라아파트", UMBER],
  [2686.5, 940, "사창시장", "#3f6f92"],
  [2799, 904, "청주중앙"],
  [2799, 932.6, "순복음교회"],
  [2398, 975.5, "사창동"],
  [2402, 1004.6, "주민센터"],
  [1869, 1017.6, "신율봉공원", MOSS],
  [1845, 1098, "청주신율봉"],
  [1845, 1123, "어린이도서관"],
  [1907.5, 1205, "복대초등학교", NAVY],
  [2294, 1208, "충북대학교", NAVY],
  [2294, 1233, "개신캠퍼스", NAVY],
  [1820, 1350, "청주아파트", UMBER],
  [2030, 1442.6, "현대아파트", UMBER],
  [1856, 1453, "개신동", UMBER],
  [1856, 1479, "청주아파트", UMBER],
  [1934, 1543.5, "청주개신주공", UMBER],
  [1934, 1568, "1단지아파트", UMBER],
  [2566, 999, "대원칸타빌", UMBER],
  [2565.6, 1024.6, "아파트", UMBER],
  [2710, 1011, "통경목련", UMBER],
  [2709, 1037, "아파트", UMBER],
  [2840, 1012, "푸르지오", UMBER],
  [2834, 1039, "1,2,3단지", UMBER],
  [2531, 1079, "서울아파트", UMBER],
  [2755, 1145, "푸르지오캐슬", UMBER],
  [2754, 1171, "4단지아파트", UMBER],
  [2583, 1228, "한진신세대", UMBER],
  [2582, 1253, "아파트", UMBER],
  [2729, 1256, "삼익아파트", UMBER],
  [2858, 1243, "주", UMBER],
  [2393.6, 1294, "우편취급국"],
  [2678, 1366, "어린이공원", MOSS],
  [2785, 1366, "개신우정", UMBER],
  [2783.5, 1391.6, "아파트", UMBER],
  [2515, 1496.5, "충북", WINE],
  [2515, 1521.5, "대학교병원", WINE],
  [2794, 1496.5, "한국방송통신", NAVY],
  [2793, 1521.5, "대학교", NAVY],
];

const districts: [number, number, string][] = [
  [2389, 562, "봉"], [2444, 562, "명"], [2489, 562, "1"], [2535, 562, "동"],
  [2535, 884, "사"], [2588, 884, "창"], [2644, 884, "동"],
  [1755, 1152, "복"], [1810, 1152, "대"], [1853, 1152, "2"], [1897, 1152, "동"],
];

const symbols = {
  factory: "M-11 8V-3L-4-8V-3L3-8V-3L11-8V8zM-7 0v2h2V0zM-1 0v2h2V0zM5 0v2h2V0z",
  school: "M-10 11V0L-1-5V-12L7-9 1-6V-5L10 0V11H3V4H-3V11z",
  cap: "M-15-3 0-10 15-3 0 4zM-9 3 0 7 9 3V8Q0 13-9 8zM12-2h2V8h-2z",
  cross: "M-3-10H3V-3H10V3H3V10H-3V3H-10V-3H-3z",
  post: "M-9-9H9L3 0 9 9H-9L-3 0zM-12-2-4 0-12 2zM12-5 5 0 12 5V2H9V-2H12z",
  tree: "M0-15 7-5H4L9 2H6L11 8H2V15H-2V8H-11L-6 2H-9L-4-5H-7z",
  book: "M0-6Q-6-10-11-8V7Q-5 4 0 9 5 4 11 7V-8Q6-10 0-6z",
  church: "M-1.500-13H1.500V-9H5V-6H1.500V-1L9 5V12H3V6H-3V12H-9V5L-1.500-1V-6H-5V-9H-1.500z",
};
const marks: [keyof typeof symbols, number, number, string][] = [
  ["factory", 1838, 424, "#48484a"],
  ["factory", 1954, 455, "#48484a"],
  ["school", 2284, 597, NAVY],
  ["school", 2238.6, 811, NAVY],
  ["cap", 1939, 643, NAVY],
  ["cross", 2016, 927.6, "#48484a"],
  ["post", 2452, 431, "#48484a"],
  ["cross", 2767.5, 416, "#48484a"],
  ["tree", 2547, 632, MOSS],
  ["school", 2645.5, 715, NAVY],
  ["church", 2799, 873, "#48484a"],
  ["book", 1845.7, 1068, "#48484a"],
  ["school", 1907.5, 1177, NAVY],
  ["cap", 2293, 1178, NAVY],
  ["post", 2393.6, 1268, "#48484a"],
  ["cross", 2515, 1469.7, WINE],
  ["cap", 2793, 1466, NAVY],
  ["tree", 2688, 1334, MOSS],
];

/* Centre of each pin's round head. */
const pins: [number, number][] = [
  [2278, 890], [2480, 872], [2446, 910], [2126, 922], [2150, 910], [2117, 966], [2053, 961], [2040, 960],
  [2090, 962], [2204, 950], [2157, 955], [2297, 985], [2325, 975], [2338, 967], [2347, 990], [2334, 996],
  [2310, 990], [2287, 1003], [2303, 1007], [2300, 992], [2322, 988], [2314, 950], [2482, 968], [2418, 986],
  [2454, 1013], [2620, 1344], [2612, 1308], [2622, 1368], [2663, 1378], [2656, 1378],
];

function Roads({ data, casing, fill, width, edge }: { data: Record<Tile, string>; casing: string; fill: string; width: number; edge: number }) {
  return (
    <g fill="none" strokeLinejoin="round" className="[&_path]:[vector-effect:non-scaling-stroke]">
      {tileKeys.map((k) => (
        <path key={k} transform={tile[k]} d={data[k]} stroke={casing} strokeWidth={width + edge} />
      ))}
      {tileKeys.map((k) => (
        <path key={k} transform={tile[k]} d={data[k]} stroke={fill} strokeWidth={width} />
      ))}
    </g>
  );
}

function CityMap() {
  return (
    <svg width="1094" height="1200" viewBox="1766 396 1094 1200" className="block">
      <rect x="1766" y="396" width="1094" height="1200" fill={LAND} />
      {tileKeys.map((k) => (
        <g key={k} transform={tile[k]}>
          {areas[k].map(([fill, d]) => (
            <path key={d} d={d} fill={fill} />
          ))}
        </g>
      ))}
      <Roads data={footways} casing="#b7bdc5" fill="#e9ebee" width={4.2} edge={1.6} />
      <g fill="#eff1f4" stroke="#a9b0b9" strokeWidth="1.400" className="[&_path]:[vector-effect:non-scaling-stroke]">
        {tileKeys.map((k) => (
          <path key={k} transform={tile[k]} d={buildings[k]} />
        ))}
      </g>
      <g fill="none" stroke="#e6f2d4" strokeWidth="1.200">
        <path d="M2446 1294 2484 1319 2458 1353 2420 1325zM2465 1306 2439 1339M2520 1339 2561 1370 2543 1395 2502 1366zM2541 1354 2523 1380" />
        <circle cx="2452" cy="1322" r="4.500" />
        <circle cx="2532" cy="1367" r="4.500" />
        <path d="M2225 1083 2268 1111M2230 1100 2262 1120" strokeDasharray="7 4" strokeWidth="7" opacity=".6" />
      </g>
      <Roads data={streets} casing="#a8a6a4" fill="#ffffff" width={6} edge={2} />
      <Roads data={mainStreets} casing="#a8a6a4" fill="#ffffff" width={7.2} edge={2} />
      <Roads data={arterials} casing="#b4b09c" fill="#fefad0" width={10} edge={2.2} />

      <g fill="none" strokeLinejoin="round">
        <path d="M2488 1601 2566 1515 2633 1442Q2690 1427 2762 1424 2820 1412 2862 1366M2611 1424Q2622 1437 2642 1440" stroke="#cdb46c" strokeWidth="12.500" />
        <path d="M2488 1601 2566 1515 2633 1442Q2690 1427 2762 1424 2820 1412 2862 1366M2611 1424Q2622 1437 2642 1440" stroke="#fde796" strokeWidth="10" />
        <path d="M2560 1245 2590 1355M2638 1474 2690 1508 2756 1538" stroke="#fff" strokeWidth="8" />
        <path d="M2560 1245 2590 1355M2638 1474 2690 1508 2756 1538" stroke="#fde38c" strokeWidth="5.500" strokeLinecap="round" />
        <path d="M1760 938 1889 920 2300 887 2520 870 2862 842" stroke="#c2a352" strokeWidth="18.500" />
        <path d="M1760 938 1889 920 2300 887 2520 870 2862 842" stroke="#f9d067" strokeWidth="16" />
      </g>

      <ellipse cx="1887" cy="919.500" rx="19.500" ry="14.500" fill="#5477e2" stroke="#3e5fc4" />
      <text x="1887" y="926.500" textAnchor="middle" fontSize="19" fontWeight="600" fill="#fff">36</text>

      <g fontSize="47" fill="#6f6f6f" fillOpacity=".38" textAnchor="middle">
        {districts.map(([x, y, t]) => (
          <text key={`${x}-${y}`} x={x} y={y + 17}>{t}</text>
        ))}
      </g>

      {marks.map(([kind, x, y, color]) => (
        <path
          key={`${x}-${y}`}
          transform={`translate(${x} ${y})`}
          d={symbols[kind]}
          fill={color}
          fillRule="evenodd"
          stroke="#fff"
          strokeWidth="2.500"
          strokeOpacity=".7"
          className="[paint-order:stroke]"
        />
      ))}
      {[[2428, 568], [2398, 948]].map(([x, y]) => (
        <g key={x}>
          <circle cx={x} cy={y} r="10.700" fill="#fff" stroke="#2b2b2b" strokeWidth="1.600" />
          <circle cx={x} cy={y} r="4.200" fill="#1f1f1f" />
        </g>
      ))}

      <g fontSize="23.200" fontWeight="500" textAnchor="middle" stroke="#fff" strokeWidth="3.200" strokeOpacity=".82" strokeLinejoin="round" className="[paint-order:stroke]">
        {labels.map(([x, y, t, color, size]) => (
          <text key={`${x}-${y}`} x={x} y={y + 8.5} fill={color ?? DARK} fontSize={size}>{t}</text>
        ))}
        <path id="overpass" d="M2585 1358Q2596 1402 2610 1424 2628 1460 2662 1492" fill="none" stroke="none" />
        <text fontSize="17.500" fontWeight="400" fill="#6c6650" textAnchor="start">
          <textPath href="#overpass">개신오거리고가차도</textPath>
        </text>
      </g>

      {pins.map(([x, y]) => (
        <g key={`${x}-${y}`} transform={`translate(${x} ${y})`}>
          <ellipse cx="4" cy="40" rx="15" ry="3" fill="#000" opacity=".16" />
          <path d="M0 42C-4 30-23.500 18-23.500-1a23.500 23.500 0 0 1 47 0C23.500 18 4 30 0 42z" fill="#f7bf42" stroke="#e0a02c" strokeWidth="1" />
          <path
            transform="scale(1.120)"
            d="M0-12 3.300-3.900 12-3.600 5.200 1.900 7.500 10 0 5.400-7.500 10-5.200 1.900-12-3.600-3.300-3.900z"
            fill="#fff"
            stroke="#e8a53a"
            strokeWidth=".7"
          />
        </g>
      ))}

      <path d="M1788 1562V1572H1900V1562" fill="none" stroke="#000" strokeWidth="4" />
      <text x="1907" y="1578" fontSize="19.500" fontWeight="600" fill="#111">250m</text>
      <text x="1973" y="1578" fontSize="24" fill="#000" className="font-['Noto_Sans']">kakao</text>
    </svg>
  );
}

export default function App() {
  return (
    <div className="flex h-[1800px] w-[2880px] flex-col overflow-hidden bg-white font-['Inter','Noto_Sans_CJK_KR',sans-serif]">
      <MenuBar />
      <div className="h-[3px] shrink-0 border-t border-black bg-[#66686a]" />
      <TabStrip />
      <Toolbar />
      <div className="h-0.5 shrink-0 bg-[#27282a]" />
      <PageHeader />
      <main className="relative flex h-[1452px] items-start overflow-hidden pt-12">
        <ShopTable />
        <section className="ml-[18px] w-[1094px] shrink-0">
          <CityMap />
          <div className="flex items-start justify-end">
            <SelectBox label="구룡산한식" className="mt-3 h-[43px] w-[248px]" />
            <SelectBox label="정문" className="mt-3 ml-2 h-[43px] w-[100px]" />
            <button className="ml-2 h-[76px] w-[172px] rounded-[8px] bg-[#343a40] pb-0.5 text-[30px] text-white">맛집추가!</button>
          </div>
        </section>
        <span className="absolute bottom-0 left-0 size-2.5 bg-[radial-gradient(circle_at_100%_0,transparent_9px,#1b1b22_10px)]" />
      </main>
    </div>
  );
}
